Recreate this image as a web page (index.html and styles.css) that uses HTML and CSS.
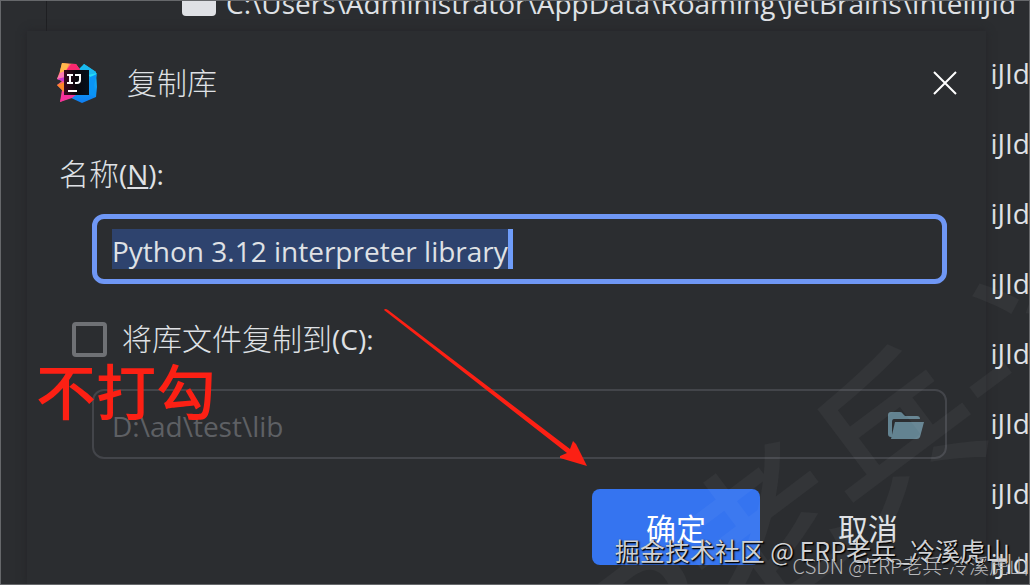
FILE: index.html
```html
<!DOCTYPE html>
<html lang="zh-CN">
<head>
<meta charset="utf-8">
<meta name="viewport" content="width=device-width, initial-scale=1">
<title>复制库</title>
<link rel="stylesheet" href="styles.css">
</head>
<body>
<main class="screen">
  <ul class="paths">
    <li class="path path-first"><span class="swatch"></span><span>C:\Users\Administrator\AppData\Roaming\JetBrains\IntelliJId</span></li>
    <li class="path">iJId</li>
    <li class="path">iJId</li>
    <li class="path">iJId</li>
    <li class="path">iJId</li>
    <li class="path">iJId</li>
    <li class="path">iJId</li>
    <li class="path">iJId</li>
    <li class="path">iJId</li>
  </ul>

  <section class="dialog" role="dialog" aria-labelledby="dialog-title">
    <header class="titlebar">
      <svg class="logo" viewBox="0 0 40 40" aria-hidden="true">
        <defs>
          <linearGradient id="warm" x1="0" y1="0" x2="0.7" y2="1">
            <stop offset="0" stop-color="#ffb03a"/>
            <stop offset="0.5" stop-color="#ff4a8c"/>
            <stop offset="1" stop-color="#e8388e"/>
          </linearGradient>
          <linearGradient id="cool" x1="0" y1="0" x2="0" y2="1">
            <stop offset="0" stop-color="#12c8f4"/>
            <stop offset="1" stop-color="#0f7df2"/>
          </linearGradient>
          <linearGradient id="ink" x1="0" y1="0" x2="1" y2="0">
            <stop offset="0" stop-color="#3a0a1e"/>
            <stop offset="0.5" stop-color="#08060a"/>
            <stop offset="1" stop-color="#06101c"/>
          </linearGradient>
        </defs>
        <path fill="url(#cool)" d="M20 8 27 1 39 9 40 24 39 34 25 40 12 34Z"/>
        <path fill="#1bb8ee" d="M27 1 39 9 33 13 24 7Z"/>
        <path fill="#27dcf5" d="M31 12 40 10 36 16Z"/>
        <path fill="#0a94f5" d="M33 14 40 11 37 23 39 34 31 31Z"/>
        <path fill="url(#warm)" d="M5 0 19 1 24 8 20 31 15 35 3 39 5 27 0 22 5 18 0 16 3 8Z"/>
        <path fill="#ffb84b" d="M5 0 12 1 8 10 3 12 3 8Z"/>
        <path fill="#f9286f" d="M14 1 19 1 24 8 8 9Z"/>
        <path fill="#ff7ab0" d="M3 10 8 8 8 15 0 16Z"/>
        <path fill="#c836cf" d="M0 16 8 14 8 19 5 18Z"/>
        <path fill="#ff8727" d="M0 22 8 19 8 30 5 27Z"/>
        <path fill="#f5309c" d="M6 29 19 32 3 39Z"/>
        <rect x="7" y="7" width="25" height="25" fill="url(#ink)"/>
        <path fill="none" stroke="#fff" stroke-width="2" d="M10 12H16M13 12V20M10 20H16M18 12H23V17Q23 20 20 20H18"/>
        <path fill="#fff" d="M11 27H20V29H11Z"/>
      </svg>
      <h1 class="title" id="dialog-title">复制库</h1>
      <button class="close" type="button" aria-label="关闭">
        <svg viewBox="0 0 24 24" aria-hidden="true"><path d="M1 1 23 23M23 1 1 23"/></svg>
      </button>
    </header>

    <form class="form">
      <label class="label" for="library-name">名称<span class="key">(<u>N</u>):</span></label>
      <div class="field field-active">
        <input class="text text-selected" id="library-name" type="text" value="Python 3.12 interpreter library">
      </div>
      <div class="option">
        <input class="tick" id="copy-files" type="checkbox">
        <label class="label" for="copy-files">将库文件复制到<span class="key">(C):</span></label>
      </div>
      <div class="field field-disabled">
        <input class="text" type="text" value="D:\ad\test\lib" aria-label="将库文件复制到" disabled>
        <button class="browse" type="button" aria-label="浏览">
          <svg viewBox="0 0 36 28" aria-hidden="true">
            <path d="M0 3Q0 0 3 0H12Q14 0 15 2L17 4H29Q32 4 32 7H6Q4 7 4 10V25H3Q0 25 0 22Z"/>
            <path d="M7 10H36L32 25Q31 27 29 27H3Z"/>
          </svg>
        </button>
      </div>
      <div class="actions">
        <button class="action action-primary" type="submit">确定</button>
        <button class="action" type="button">取消</button>
      </div>
    </form>
  </section>

  <svg class="markup" viewBox="0 0 1030 585" aria-hidden="true">
    <text class="stamp" x="-390" y="58" transform="translate(766 534) rotate(-37)">ERP<tspan x="-81">老兵-冷溪</tspan></text>
    <path class="arrow" d="M384 310Q385 308 388 310L570 449 573 441 576 444 587 466 560 458 560 456 567 453Z"/>
  </svg>
  <p class="note">不打勾</p>
  <p class="credit">掘金技术社区 @ ERP老兵_冷溪虎山</p>
  <p class="source">CSDN @ERP老兵-冷溪虎山</p>
</main>
</body>
</html>
```
FILE: styles.css
```css
* {
  box-sizing: border-box;
}

body {
  margin: 0;
  background: #2b2d30;
  color: #dfe1e5;
  font: 28px/40px "Open Sans", "Noto Sans CJK SC", sans-serif;
}

button,
input {
  margin: 0;
  padding: 0;
  border: 0;
  background: none;
  color: inherit;
  font: inherit;
}

.screen {
  position: relative;
  height: 100vh;
  overflow: hidden;
}

.screen::after {
  content: "";
  position: absolute;
  inset: 0;
  border: 1px solid #66686b;
  pointer-events: none;
}

.paths {
  margin: -32px 0 0;
  padding: 0;
  list-style: none;
}

.path {
  display: flex;
  align-items: center;
  justify-content: flex-end;
  height: 70px;
  white-space: nowrap;
}

.path-first {
  justify-content: flex-start;
  gap: 10px;
  margin-left: 46px;
  padding-left: 135px;
  border-left: 1px solid #1e1f22;
}

.swatch {
  flex: none;
  width: 34px;
  height: 34px;
  margin-bottom: 8px;
  border-radius: 4px;
  background: #dfe1e5;
}

.dialog {
  position: absolute;
  inset: 31px 44px 0 27px;
  background: #2b2d30;
  box-shadow: 0 0 8px #242528;
}

.titlebar {
  display: flex;
  align-items: center;
  height: 104px;
  padding: 0 29px 0 30px;
}

.logo {
  width: 40px;
  height: 40px;
}

.title {
  margin: 0 auto 0 30px;
  font-size: 30px;
  font-weight: 300;
}

.close {
  width: 24px;
  height: 24px;
}

.close svg,
.browse svg {
  display: block;
  width: 100%;
}

.close path {
  fill: none;
  stroke: #fff;
  stroke-width: 2;
}

.form {
  display: flex;
  flex-direction: column;
  padding: 19px 34px 0 32px;
}

.label {
  font-size: 30px;
  font-weight: 300;
}

.key {
  font-size: 28px;
  font-weight: 400;
}

.field {
  display: flex;
  align-items: center;
  height: 70px;
  margin: 20px 5px 0 33px;
  border-radius: 12px;
}

.field-active {
  padding: 0 15px;
  border: 5px solid #6f97f5;
}

.field-disabled {
  justify-content: space-between;
  margin-top: 30px;
  padding: 3px 21px 0 18px;
  border: 2px solid #43454a;
  color: #5e6064;
}

.text {
  height: 40px;
  outline: none;
}

.text-selected {
  field-sizing: content;
  padding-top: 3px;
  border-right: 5px solid #6f9dfa;
  background: #2e436e;
}

.browse {
  width: 36px;
  height: 28px;
}

.browse path {
  fill: #638391;
}

.option {
  display: flex;
  align-items: center;
  gap: 15px;
  margin: 35px 0 0 13px;
}

.tick {
  width: 35px;
  height: 35px;
  appearance: none;
  border: 4px solid #6f7175;
  border-radius: 4px;
}

.actions {
  display: flex;
  justify-content: flex-end;
  gap: 24px;
  margin-top: 30px;
}

.action {
  width: 168px;
  height: 76px;
  padding-top: 4px;
  border-radius: 8px;
  font-size: 30px;
}

.action-primary {
  background: #3574f0;
  color: #fff;
}

.markup {
  position: absolute;
  top: 0;
  left: 0;
  width: 100%;
  pointer-events: none;
}

.stamp {
  fill: #fff;
  fill-opacity: 0.04;
  font: 500 162px "Noto Sans CJK SC", sans-serif;
}

.arrow {
  fill: #fc2014;
}

.note,
.credit,
.source {
  position: absolute;
  margin: 0;
  white-space: nowrap;
  pointer-events: none;
}

.note {
  top: 359px;
  left: 36px;
  color: #fc2014;
  font: 500 60px/60px "Noto Sans CJK SC", sans-serif;
}

.credit {
  right: 20px;
  bottom: 17px;
  color: #d0d1d4;
  font: 25px/36px "Noto Sans CJK SC", sans-serif;
  text-shadow: 1px 1px 1px #000, 1px 1px 2px #000;
}

.source {
  right: 1px;
  bottom: 6px;
  color: #b8b9bc;
  font: 300 20px/26px "Noto Sans CJK SC", sans-serif;
}
```
